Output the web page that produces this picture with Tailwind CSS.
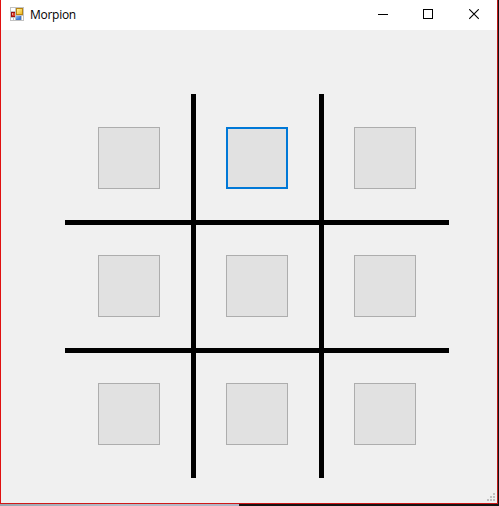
<!DOCTYPE html>
<html lang="fr">
<head>
<meta charset="utf-8">
<title>Morpion</title>
<script src="https://cdn.jsdelivr.net/npm/@tailwindcss/browser@4"></script>
</head>
<body class="w-[499px] h-[506px] overflow-hidden bg-[#161314] flex flex-col">
  <div class="w-[498px] h-[504px] flex flex-col bg-[#f0f0f0] border-x border-b border-l-[#e01010] border-r-[#c01a1a] border-b-[#d01818] relative">
    <header class="h-[30px] shrink-0 bg-white flex items-center">
      <svg class="ml-[9px] mt-[-2px] size-[14px] shrink-0" viewBox="0 0 14 14" shape-rendering="crispEdges">
        <defs>
          <linearGradient id="y" x2="1" y2="1"><stop stop-color="#fff3a0"/><stop offset="1" stop-color="#f0b820"/></linearGradient>
          <linearGradient id="b" x2="1" y2="1"><stop stop-color="#8fbcf5"/><stop offset="1" stop-color="#2f6fd0"/></linearGradient>
        </defs>
        <rect width="14" height="14" fill="#c2c2c2"/>
        <path fill="#fff" d="M1 1h4v3H1zM1 11h2v2H1zM4 11h1v2H4zM12 9h1v4h-1z"/>
        <path fill="#9c1010" d="M1 5h4v5H1z"/><path fill="#d8402c" d="M2 6h3v3H2z"/><path fill="#f3a090" d="M2 6h1v2H2z"/>
        <path fill="#b88410" d="M6 1h7v7H6z"/><path fill="url(#y)" d="M7 2h5v5H7z"/>
        <path fill="#3f78d0" d="M6 9h5v4H6z"/><path fill="url(#b)" d="M6 9h4v3H6z"/>
      </svg>
      <span class="ml-[6px] text-[12px] leading-[16px] tracking-[-0.28px] text-black font-['Open_Sans','Noto_Sans',sans-serif]">Morpion</span>
      <div class="ml-auto mr-[18px] mt-[-1px] flex items-center">
        <svg class="w-[10px] h-[11px] mr-[35px]" viewBox="0 0 10 11" shape-rendering="crispEdges"><path fill="#000" d="M0 5h10v1H0z"/></svg>
        <svg class="w-[10px] h-[11px] mr-[36px]" viewBox="0 0 10 11" shape-rendering="crispEdges"><path fill="none" stroke="#000" d="M.5 .5h9v9h-9z"/></svg>
        <svg class="w-[10px] h-[11px]" viewBox="0 0 10 11"><path stroke="#000" stroke-width="1.1" d="M.2 .2l9.6 9.6M9.8 .2L.2 9.8"/></svg>
      </div>
    </header>
    <main class="flex-1 pt-[64px] pl-[64px]">
      <div class="relative size-[384px]">
        <svg class="absolute inset-0 size-[384px]" viewBox="0 0 384 384" shape-rendering="crispEdges"><path d="M126 0h5v384h-5zM254 0h5v384h-5zM0 126h384v5H0zM0 254h384v5H0z"/></svg>
        <div class="relative grid grid-cols-3 gap-[66px] p-[33px]">
          <button class="size-[62px] bg-[#e1e1e1] border border-[#adadad]"></button>
          <button class="size-[62px] bg-[#e1e1e1] border-2 border-[#0078d7]"></button>
          <button class="size-[62px] bg-[#e1e1e1] border border-[#adadad]"></button>
          <button class="size-[62px] bg-[#e1e1e1] border border-[#adadad]"></button>
          <button class="size-[62px] bg-[#e1e1e1] border border-[#adadad]"></button>
          <button class="size-[62px] bg-[#e1e1e1] border border-[#adadad]"></button>
          <button class="size-[62px] bg-[#e1e1e1] border border-[#adadad]"></button>
          <button class="size-[62px] bg-[#e1e1e1] border border-[#adadad]"></button>
          <button class="size-[62px] bg-[#e1e1e1] border border-[#adadad]"></button>
        </div>
      </div>
    </main>
    <svg class="absolute right-[2px] bottom-[2px] size-[8px]" viewBox="0 0 8 8" shape-rendering="crispEdges"><path fill="#bfbfbf" d="M6 0h2v2H6zM3 3h2v2H3zM6 3h2v2H6zM0 6h2v2H0zM3 6h2v2H3zM6 6h2v2H6z"/></svg>
  </div>
  <div class="h-[2px] w-[239px] bg-linear-to-r from-[#9aa6b0] via-[#b4bcc8] to-[#b0b4c4]"></div>
</body>
</html>
